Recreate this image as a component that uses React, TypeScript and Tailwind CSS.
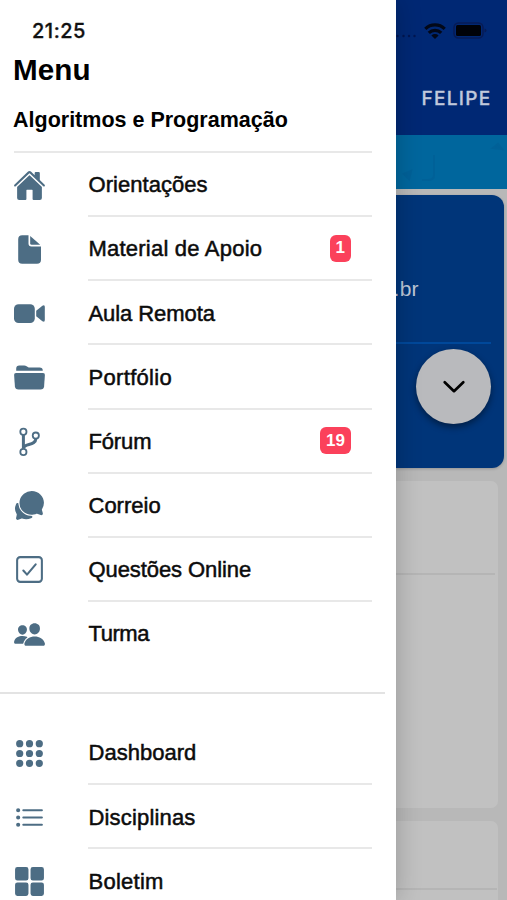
import React from 'react'
import type { ComponentType } from 'react'
import {
  IoApps,
  IoChatbubbles,
  IoCheckboxOutline,
  IoGrid,
  IoHome,
  IoListOutline,
  IoPeople,
} from 'react-icons/io5'

type IconProps = { className?: string }

type MenuItem = {
  icon: ComponentType<IconProps>
  label: string
  tracking: string
  badge?: number
}

const DocumentIcon = ({ className }: IconProps) => (
  <svg viewBox="0 0 33 33" className={className} fill="currentColor">
    <path d="M9.2 2.3h6.3v8.2q0 3 3 3H28v13.2q0 4-4 4H9.2q-4 0-4-4V6.3q0-4 4-4Z" />
    <path d="M17.2 3v7.4q0 1.4 1.4 1.4h8.6Z" />
  </svg>
)

const VideoIcon = ({ className }: IconProps) => (
  <svg viewBox="0 0 33 33" className={className} fill="currentColor">
    <rect x="1" y="7.2" width="20.8" height="18.8" rx="4.6" />
    <path d="m23.2 13.8 6.2-5q2.4-1.4 2.4 1.2v13q0 2.6-2.4 1.2l-6.2-5Z" />
  </svg>
)

const FolderIcon = ({ className }: IconProps) => (
  <svg viewBox="0 0 33 33" className={className} fill="currentColor">
    <path d="M3.2 9.8V7.6q0-3.2 3.2-3.2h4.8q1.4 0 2.4.8l1.2.8q.8.5 2 .5h9.8q3.2 0 3.2 3.3Z" />
    <path d="M3 12h27q2 0 1.9 2l-.8 11.3q-.3 3.3-3.6 3.3h-22q-3.3 0-3.6-3.3L1.1 14Q1 12 3 12Z" />
  </svg>
)

const BranchIcon = ({ className }: IconProps) => (
  <svg viewBox="0 0 33 33" className={className} fill="none" stroke="currentColor">
    <g strokeWidth="1.8">
      <circle cx="10.4" cy="6.7" r="3.1" />
      <circle cx="22.8" cy="10.6" r="3.1" />
      <circle cx="10.4" cy="27" r="3.1" />
    </g>
    <path strokeWidth="3" d="M10.4 10v13.8M22.8 13.8c0 7.4-12.4 4.2-12.4 9.8" />
  </svg>
)

const courseItems: MenuItem[] = [
  { icon: IoHome, label: 'Orientações', tracking: 'tracking-[0.04px]' },
  { icon: DocumentIcon, label: 'Material de Apoio', tracking: 'tracking-[0.22px]', badge: 1 },
  { icon: VideoIcon, label: 'Aula Remota', tracking: 'tracking-[-0.07px]' },
  { icon: FolderIcon, label: 'Portfólio', tracking: 'tracking-[0.32px]' },
  { icon: BranchIcon, label: 'Fórum', tracking: 'tracking-[-0.15px]', badge: 19 },
  { icon: IoChatbubbles, label: 'Correio', tracking: 'tracking-[0px]' },
  { icon: IoCheckboxOutline, label: 'Questões Online', tracking: 'tracking-[-0.08px]' },
  { icon: IoPeople, label: 'Turma', tracking: 'tracking-[-0.45px]' },
]

const generalItems: MenuItem[] = [
  { icon: IoApps, label: 'Dashboard', tracking: 'tracking-[0.02px]' },
  { icon: IoListOutline, label: 'Disciplinas', tracking: 'tracking-[0.17px]' },
  { icon: IoGrid, label: 'Boletim', tracking: 'tracking-[0.25px]' },
]

const MenuList = ({ items }: { items: MenuItem[] }) => (
  <ul>
    {items.map((item) => (
      <li key={item.label} className="group flex h-[64.15px] pl-[13px]">
        <div className="flex w-[75px] items-center">
          <item.icon className="h-[33px] w-[33px] text-[#4d6d84]" />
        </div>
        <div className="mr-6 flex flex-1 items-center justify-between border-b-2 border-[#e8e8e8] pr-[21px] group-last:border-transparent">
          <span
            className={`pt-[1.5px] pl-[0.5px] text-[22px] text-[#0c0c0c] [-webkit-text-stroke:0.5px_#0c0c0c] ${item.tracking}`}
          >
            {item.label}
          </span>
          {item.badge && (
            <span className="flex h-[27px] items-center rounded-[6px] bg-[#fb415b] px-1.5 text-[17px] font-bold text-white">
              {item.badge}
            </span>
          )}
        </div>
      </li>
    ))}
  </ul>
)

const Drawer = () => (
  <aside className="relative z-10 h-full w-[396px] shrink-0 overflow-hidden bg-white shadow-[0_0_24px_rgba(0,0,0,0.22)]">
    <div className="flex h-[52px] items-center pt-[9px] pl-8 font-[Inter,sans-serif] text-[20px] leading-6 font-medium tracking-[0.5px] text-[#111] [-webkit-text-stroke:0.3px_#111]">
      21:25
    </div>
    <h1 className="h-[45px] pl-[13px] text-[29.6px] leading-[36px] font-bold tracking-[0.1px] text-black">Menu</h1>
    <div className="mr-6 ml-3.5 h-[56px] border-b-2 border-[#e8e8e8]">
      <h2 className="-ml-px pt-[9px] text-[21.5px] leading-7 font-bold whitespace-nowrap text-black">Algoritmos e Programação</h2>
    </div>
    <MenuList items={courseItems} />
    <div className="mr-[11px] mb-[27px] h-[28px] border-b-2 border-[#e3e3e3]" />
    <MenuList items={generalItems} />
  </aside>
)

const StatusIcons = () => (
  <div className="flex h-[52px] items-center gap-[7px] pt-[9px]">
    <svg viewBox="0 0 21 4" className="mt-2.5 h-1 w-[21px]" fill="#001650">
      <circle cx="1.5" cy="2" r="1.2" />
      <circle cx="7.5" cy="2" r="1.2" />
      <circle cx="13" cy="2" r="1.2" />
      <circle cx="18.5" cy="2" r="1.2" />
    </svg>
    <svg viewBox="0 0 22 16" className="h-4 w-[22px]" fill="none" stroke="#020818" strokeWidth="3.2">
      <path d="M1.3 5.8a14 14 0 0 1 19.4 0" />
      <path d="M4.8 9.9a8.8 8.8 0 0 1 12.4 0" />
      <path d="m11 16-3.6-3.5a5.1 5.1 0 0 1 7.2 0Z" fill="#020818" stroke="none" />
    </svg>
    <svg viewBox="0 0 34 17" className="h-[17px] w-[34px]">
      <rect x="1" y="1" width="29" height="15" rx="4.5" fill="none" stroke="#071b55" strokeWidth="1.5" />
      <rect x="3" y="3" width="25" height="11" rx="1.5" fill="#000208" />
      <path d="M31.5 6.5v4q2-.6 2-2t-2-2Z" fill="#071b55" />
    </svg>
  </div>
)

// Dimmed home page, visible to the right of the open drawer
const PageBehind = () => (
  <main className="flex min-w-0 flex-1 flex-col bg-[#b8b8b8]">
    <header className="h-[135px] shrink-0 bg-[#002874]">
      <StatusIcons />
      <div className="pt-[34px] pl-[25.5px] font-[Inter,sans-serif] text-[19px] leading-[26px] font-medium tracking-[1.3px] text-[#c0c9dc] [-webkit-text-stroke:0.3px_#c0c9dc]">
        FELIPE
      </div>
    </header>
    <div className="h-[54px] shrink-0 bg-[#00669d]">
      <svg viewBox="0 0 111 54" className="h-full w-full" fill="none" stroke="#005d94" strokeWidth="2" opacity="0.55">
        <path d="M38 20v20q0 5-6 5h-6" />
        <path d="m97 13 5-4 4 5Z" fill="#005d94" />
        <path d="m8 39 7-3-2 8Z" fill="#005d94" />
      </svg>
    </div>
    <section className="mt-1.5 mr-[3px] h-[273px] shrink-0 rounded-r-[12px] bg-[#003579] shadow-[0_1px_3px_rgba(0,0,0,0.2)]">
      <div className="mr-[13px] h-[149px] border-b-2 border-[#00489a] pt-[80px] text-[21px] leading-7 tracking-[0.3px] text-[#bdc7d7]">
        <span className="-ml-[2.5px]">.br</span>
      </div>
      <div className="mt-[5px] ml-5 flex h-[75px] w-[75px] items-center justify-center rounded-full bg-[#b9babd] shadow-[0_3px_7px_rgba(0,0,0,0.45)]">
        <svg viewBox="0 0 24 16" className="h-4 w-6" fill="none" stroke="#000" strokeWidth="2.7" strokeLinecap="round" strokeLinejoin="round">
          <path d="m2.7 3.2 9.3 9 9.3-9" />
        </svg>
      </div>
    </section>
    <section className="mt-[13px] mr-[9px] h-[327px] shrink-0 rounded-r-[7px] bg-[#c1c1c1]">
      <div className="mr-[3px] h-[94px] border-b-2 border-[#b5b5b5]" />
    </section>
    <section className="mt-[13px] mr-[9px] h-[100px] shrink-0 rounded-r-[7px] bg-[#c1c1c1]">
      <div className="mr-[1px] h-[69px] border-b-2 border-[#b5b5b5]" />
    </section>
  </main>
)

export default function App() {
  return (
    <div className="flex h-[900px] w-[507px] overflow-hidden font-['Liberation_Sans',Arial,sans-serif]">
      <Drawer />
      <PageBehind />
    </div>
  )
}
